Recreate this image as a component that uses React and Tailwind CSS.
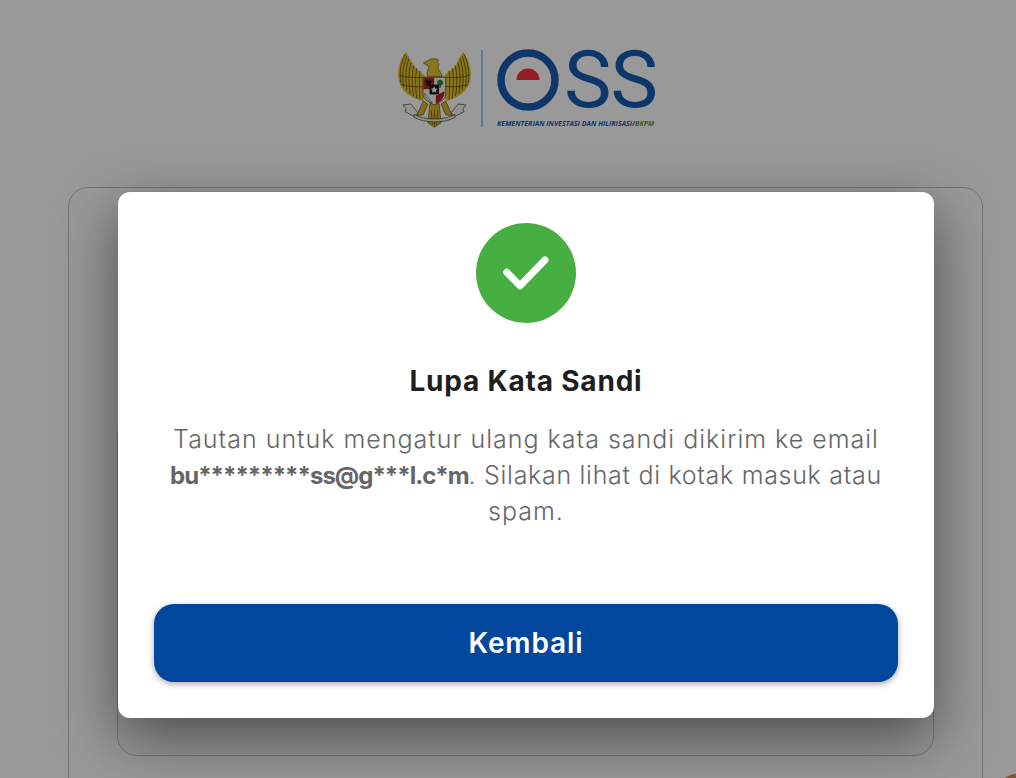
const wingFeathers = [
  'M72 54 C60 80 54 110 60 142',
  'M78 60 C68 86 62 116 68 154',
  'M84 68 C76 92 72 122 78 164',
  'M91 78 C84 100 82 130 88 173',
  'M99 88 C94 110 92 138 98 181',
  'M108 96 C104 118 103 146 108 187',
  'M118 104 C115 124 115 152 118 191',
  'M56 118 C76 124 100 126 128 124',
  'M60 146 C80 152 104 154 128 152',
]

function Crest() {
  return (
    <svg width="75" height="80" viewBox="48 38 228 243" className="shrink-0">
      <g id="wing">
        <path d="M75 48 C58 68 50 96 52 122 C54 154 72 180 128 197 L136 122 C120 106 104 98 96 84 C88 72 84 58 75 48 Z" fill="#e6c52c" />
        {wingFeathers.map((d) => (
          <path key={d} d={d} fill="none" stroke="#6a520a" strokeWidth="2.6" />
        ))}
      </g>
      <use href="#wing" transform="translate(324 0) scale(-1 1)" />
      {/* legs and tail */}
      <path d="M128 196 L142 206 L128 238 L108 240 Z" fill="#d9b526" stroke="#5f4a0a" strokeWidth="2" />
      <path d="M196 196 L182 206 L196 238 L216 240 Z" fill="#d9b526" stroke="#5f4a0a" strokeWidth="2" />
      <path d="M148 204 L176 204 L182 262 L162 276 L142 262 Z" fill="#d9b526" stroke="#5f4a0a" strokeWidth="2" />
      <path d="M152 224 L156 268 M162 224 L162 272 M172 224 L168 268" stroke="#5f4a0a" strokeWidth="2" fill="none" />
      {/* ribbon */}
      <path d="M90 205 L66 208 L76 220 L72 228 L100 243 L112 232 Z" fill="#f6f6f0" stroke="#33332a" strokeWidth="2" />
      <path d="M234 205 L258 208 L248 220 L252 228 L224 243 L212 232 Z" fill="#f6f6f0" stroke="#33332a" strokeWidth="2" />
      <path d="M100 236 C130 256 194 256 224 236 L224 246 C194 264 130 264 100 246 Z" fill="#eeeee6" stroke="#33332a" strokeWidth="2" />
      {/* neck and head */}
      <path d="M140 122 C138 108 142 100 146 92 L128 80 L146 71 C154 65 172 68 175 72 L170 78 L176 84 L172 96 C178 106 184 114 185 122 Z" fill="#e6c52c" stroke="#5f4a0a" strokeWidth="2" />
      {/* shield */}
      <path d="M127 124 L196 124 L196 176 C196 192 178 200 162 208 C146 200 127 192 127 176 Z" fill="#f7f7f2" stroke="#2c2c26" strokeWidth="2" />
      <rect x="128" y="125" width="33" height="35" fill="#b3202a" />
      <path d="M134 134 L154 134 L148 150 L140 150 Z" fill="#241313" />
      <circle cx="179" cy="140" r="9" fill="#268a3e" />
      <rect x="177" y="146" width="4" height="10" fill="#6c4b1a" />
      <rect x="147" y="146" width="29" height="30" fill="#1b1b1b" />
      <path d="M161 151 L164 158 L171 159 L166 164 L168 171 L161 167 L154 171 L156 164 L151 159 L158 158 Z" fill="#fff" />
      <path d="M166 180 L192 166 C194 182 184 196 166 204 Z" fill="#b3202a" />
      <path d="M132 172 C140 182 148 192 156 202 C142 196 130 188 132 172 Z" fill="#dfe6d0" stroke="#5d6b3a" strokeWidth="1.5" />
    </svg>
  )
}

function OssMark() {
  return (
    <div className="flex flex-col">
      <div className="flex items-center h-[62px]">
        <svg width="62" height="62" viewBox="0 0 62 62" className="shrink-0">
          <circle cx="31" cy="31" r="27" fill="none" stroke="#165db3" strokeWidth="7.5" />
          <path d="M19.5 31 A11.5 11.5 0 0 1 42.5 31 Z" fill="#f5333f" />
        </svg>
        <span className="ml-[5px] font-['Roboto',sans-serif] text-[80px] leading-[62px] font-normal tracking-[-1px] text-[#165db3]">SS</span>
      </div>
      <div className="mt-[9px] whitespace-nowrap font-['Open_Sans',sans-serif] text-[7px] leading-[8px] font-bold italic tracking-[0.04px] text-[#165db3]">
        KEMENTERIAN INVESTASI DAN HILIRISASI/<span className="text-[#4d9e5a]">BKPM</span>
      </div>
    </div>
  )
}

function BackgroundPage() {
  return (
    <div className="w-[1052px] bg-white">
      <div className="flex pl-[397px] pt-[49px]">
        <Crest />
        <div className="ml-[9px] mr-[14px] mt-px h-[77px] w-[2px] bg-[#b4c6d8]" />
        <OssMark />
      </div>
      <div className="ml-[68px] mt-[58px] h-[700px] w-[915px] rounded-[20px] border border-[#c0c4c8] px-[48px] pt-[228px]">
        <div className="h-[340px] rounded-[20px] border border-[#c0c4c8]" />
      </div>
    </div>
  )
}

export default function App() {
  return (
    <div className="relative h-[778px] w-[1016px] overflow-hidden bg-white font-['Inter',sans-serif]">
      <BackgroundPage />
      {/* chat bubble peeking from the bottom corner */}
      <div className="absolute left-[997px] top-[774px] size-[40px] rounded-full bg-[#d98a5a]" />

      <div className="absolute left-0 top-0 h-full w-[1052px] bg-black/40 pt-[192px]">
        <div className="mx-auto flex h-[526px] w-[816px] flex-col items-center rounded-[12px] bg-white px-[36px] pt-[31px] shadow-[0_20px_60px_rgba(0,0,0,0.5)]">
          <div className="flex size-[100px] items-center justify-center rounded-full bg-[#47af41]">
            <svg width="100" height="100" viewBox="0 0 100 100">
              <path d="M30.7 49.3 L44 62.7 L69 37" fill="none" stroke="#fff" strokeWidth="7" strokeLinecap="round" strokeLinejoin="round" />
            </svg>
          </div>
          <h1 className="mt-[41px] text-[28px] leading-[34px] font-bold tracking-[0.8px] text-[#1f1f1f]">Lupa Kata Sandi</h1>
          <p className="mt-[23px] text-center text-[25px] leading-[36px] font-light tracking-[1px] text-[#666666]">
            Tautan untuk mengatur ulang kata sandi dikirim ke email{' '}
            <strong className="text-[24px] leading-[0] font-bold tracking-[-1px]">bu*********ss@g***l.c*m</strong>
            <span className="tracking-[0.7px]">. Silakan lihat di kotak masuk atau</span> spam.
          </p>
          <button className="mt-[75px] h-[78px] w-full shrink-0 rounded-[20px] bg-[#00479d] text-[28px] font-semibold tracking-[0.9px] text-white shadow-[0_2px_6px_rgba(0,0,0,0.35)]">
            Kembali
          </button>
        </div>
      </div>
    </div>
  )
}
